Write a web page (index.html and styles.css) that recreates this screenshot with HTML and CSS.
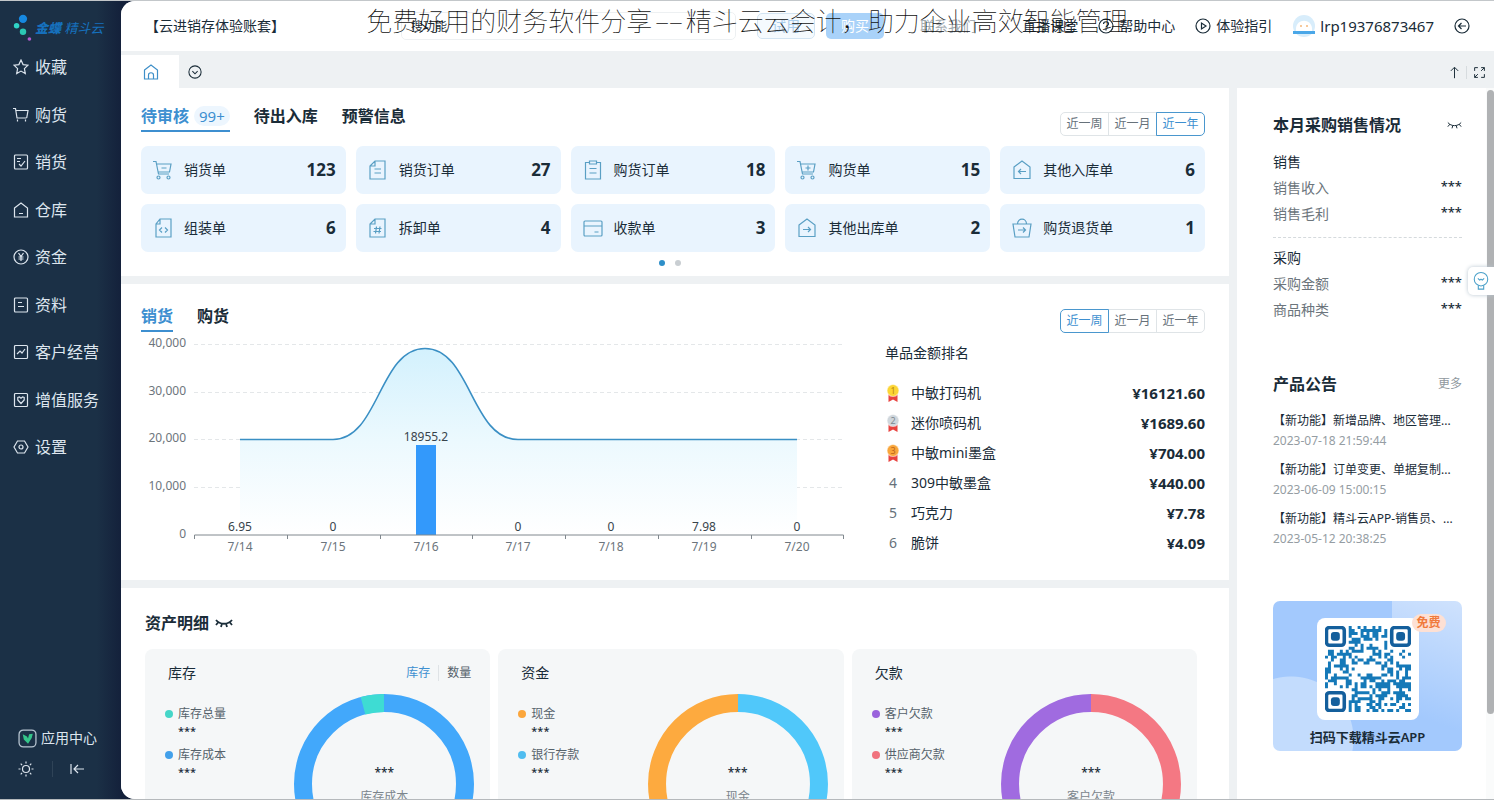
FILE: index.html
```html
<!DOCTYPE html>
<html lang="zh-CN">
<head>
<meta charset="utf-8">
<title>精斗云 云进销存</title>
<link rel="stylesheet" href="styles.css">
</head>
<body>
<svg class="sprite" aria-hidden="true">
  <symbol id="star" viewBox="0 0 16 16"><path d="M8 1l2.1 4.6 4.900.6-3.600 3.400.900 4.900L8 12.100l-4.300 2.400.900-4.900L1 6.200l4.900-.6z"/></symbol>
  <symbol id="cart" viewBox="0 0 16 16"><path d="M0 1.500h2.500L4 11h9.500M3 3.500h12l-1.300 7.500M4.500 12.500v2M12.500 12.500v2"/></symbol>
  <symbol id="sale" viewBox="0 0 16 16"><rect x="1.500" y="1" width="13" height="14" rx="1"/><path d="M4 4.500h4M4 7.500h3M6 10l2 2 4-5"/></symbol>
  <symbol id="house" viewBox="0 0 16 16"><path d="M1.500 6L8 1l6.500 5v9h-13zM6 11.500h4"/></symbol>
  <symbol id="money" viewBox="0 0 16 16"><circle cx="8" cy="8" r="7"/><path d="M5.500 4L8 7.500 10.500 4M8 7.500V12M5.500 8h5M5.500 10h5"/></symbol>
  <symbol id="data" viewBox="0 0 16 16"><rect x="1.500" y="1" width="13" height="14" rx="1"/><path d="M5 5.500h4M5 9.500h6"/></symbol>
  <symbol id="trend" viewBox="0 0 16 16"><rect x="1.500" y="1.500" width="13" height="13" rx="1"/><path d="M4 10l3-3 2 2 3-4"/></symbol>
  <symbol id="heart" viewBox="0 0 16 16"><rect x="1.500" y="1.500" width="13" height="13" rx="1"/><path d="M8 11.500L4.800 8V5.500L6.500 5 8 6.200 9.500 5l1.700.5V8z"/></symbol>
  <symbol id="gear" viewBox="0 0 16 16"><path d="M4.500 2h7L15 8l-3.500 6h-7L1 8z"/><circle cx="8" cy="8" r="2"/></symbol>
  <symbol id="cart-minus" viewBox="0 0 20 20"><path d="M0 1.500h3L5.500 14H16M3.500 4H18l-1.500 8H5M8.500 8h5"/><circle cx="5.500" cy="17.500" r="1.500"/><circle cx="15.500" cy="17.500" r="1.500"/></symbol>
  <symbol id="cart-plus" viewBox="0 0 20 20"><path d="M0 1.500h3L5.500 14H16M3.500 4H18l-1.500 8H5M11 5.500v5M8.500 8h5"/><circle cx="5.500" cy="17.500" r="1.500"/><circle cx="15.500" cy="17.500" r="1.500"/></symbol>
  <symbol id="doc" viewBox="0 0 20 20"><path d="M7 1h10v18H2V6zM7 1v5H2M6.500 9h6.500M6.500 13h6.500"/></symbol>
  <symbol id="doc-code" viewBox="0 0 20 20"><path d="M7 1h11v18H3V6zM7 1v5H3M9 9.500l-2.500 2.500L9 14.500M12 9.500l2.500 2.500-2.500 2.500"/></symbol>
  <symbol id="doc-hash" viewBox="0 0 20 20"><path d="M7 1h10v18H2V6zM7 1v5H2M8.500 8.500l-1 7M12 8.500l-1 7M6 10.500h7.500M5.500 13.500H13"/></symbol>
  <symbol id="clip" viewBox="0 0 20 20"><path d="M6.500 2.500H2.500V19h15V2.500h-4M6.500 1h7v3h-7zM6.500 8.500h7M6.500 13h7"/></symbol>
  <symbol id="card" viewBox="0 0 20 20"><rect x="1" y="3" width="18" height="15" rx="1"/><path d="M1 8h18M11.500 14h4"/></symbol>
  <symbol id="store-in" viewBox="0 0 20 20"><path d="M2 7l8-6 8 6v11.500H2zM14 11.500H6.500M9 9l-2.500 2.500L9 14"/></symbol>
  <symbol id="store-out" viewBox="0 0 20 20"><path d="M2 7l8-6 8 6v11.500H2zM6 11.500h7.500M11 9l2.500 2.500L11 14"/></symbol>
  <symbol id="bag" viewBox="0 0 20 20"><path d="M1 6h18l-2 13H3zM5.500 6c0-6.500 9-6.500 9 0M6 12h7.500M11 9.500l2.500 2.500-2.500 2.500"/></symbol>
  <symbol id="eye" viewBox="0 0 18 12"><path d="M1 3c4 5 12 5 16 0M3.500 5L1 8M7 6.500L6 10M11 6.500l1 3.500M14.500 5L17 8"/></symbol>
  <symbol id="medal" viewBox="0 0 16 20"><path d="M3.500 11h9V19L8 16.500 3.500 19z" fill="#e8423f" stroke="none"/><circle cx="8" cy="7.500" r="6" fill="currentColor" stroke="#fff" stroke-opacity=".5"/></symbol>
</svg>

<div class="app">
  <aside class="sidebar">
    <div class="logo">
      <svg viewBox="0 0 24 30"><circle cx="12" cy="5" r="4.500" fill="#1688e0"/><circle cx="5" cy="12.500" r="3" fill="#2fd3c6"/><circle cx="12" cy="19" r="3.500" fill="#2cc7b4"/><circle cx="19" cy="27" r="2" fill="#b65ad0"/></svg>
      <span class="logo-text"><b>金蝶</b> 精斗云</span>
    </div>
    <nav class="menu">
      <a href="#"><svg><use href="#star"/></svg>收藏</a>
      <a href="#"><svg><use href="#cart"/></svg>购货</a>
      <a href="#"><svg><use href="#sale"/></svg>销货</a>
      <a href="#"><svg><use href="#house"/></svg>仓库</a>
      <a href="#"><svg><use href="#money"/></svg>资金</a>
      <a href="#"><svg><use href="#data"/></svg>资料</a>
      <a href="#"><svg><use href="#trend"/></svg>客户经营</a>
      <a href="#"><svg><use href="#heart"/></svg>增值服务</a>
      <a href="#"><svg><use href="#gear"/></svg>设置</a>
    </nav>
    <div class="side-foot">
      <a class="apps" href="#"><svg viewBox="0 0 18 18"><rect x="1" y="1" width="16" height="16" rx="4" stroke="#b9c6d2"/><path d="M4.500 5l4 2 1 2 1-4 3.500-.5-1 4-3.500 5.500-4-4z" fill="#35c58a" stroke="none"/></svg>应用中心</a>
      <div class="tools">
        <button aria-label="主题"><svg viewBox="0 0 16 16"><circle cx="8" cy="8" r="3.500"/><path d="M8 .5v2M8 13.500v2M.5 8h2M13.500 8h2M2.700 2.700l1.400 1.400M11.900 11.900l1.400 1.400M2.700 13.300l1.400-1.400M11.900 4.100l1.400-1.400"/></svg></button>
        <button aria-label="收起"><svg viewBox="0 0 16 16"><path d="M2 3v10M15 8H5M9 4L5 8l4 4"/></svg></button>
      </div>
    </div>
  </aside>

  <div class="main">
    <header class="topbar">
      <span class="account">【云进销存体验账套】</span>
      <input class="search" type="text" aria-label="搜索" placeholder="搜功能">
      <button class="btn trial">试用</button>
      <button class="btn buy">购买</button>
      <a class="faint" href="#">联系我们</a>
      <span class="links">
        <a href="#">直播课堂</a>
        <a href="#"><svg viewBox="0 0 16 16"><circle cx="8" cy="8" r="7"/><path d="M5.500 6c0-3 5-3 5 0 0 1.500-2.500 1.500-2.500 3.500M8 11v1.500"/></svg>帮助中心</a>
        <a href="#"><svg viewBox="0 0 16 16"><circle cx="8" cy="8" r="7"/><path d="M6.500 5v6l4.500-3z"/></svg>体验指引</a>
        <a href="#" class="user"><svg viewBox="0 0 24 24"><circle cx="12" cy="12" r="11" fill="#d8edfb" stroke="none"/><path d="M4 15c0-11 16-11 16 0v4H4z" fill="#fff" stroke="none"/><path d="M1 17h22v3H1z" fill="#4aa7e8" stroke="none"/><path d="M9 11v2M15 11v2" stroke="#f2a65a"/></svg>lrp19376873467</a>
        <a href="#" aria-label="退出"><svg viewBox="0 0 16 16"><circle cx="8" cy="8" r="7"/><path d="M12 8H4.500M7.500 5l-3 3 3 3"/></svg></a>
      </span>
    </header>
    <div class="tabbar">
      <a class="tab-home" href="#" aria-label="首页"><svg viewBox="0 0 16 16"><path d="M1.500 6L8 1l6.500 5v9h-13zM5.500 15v-4c0-3 5-3 5 0v4"/></svg></a>
      <button class="tab-more" aria-label="更多标签"><svg viewBox="0 0 16 16"><circle cx="8" cy="8" r="7"/><path d="M5 7l3 3 3-3"/></svg></button>
      <span class="tab-tools">
        <button aria-label="置顶"><svg viewBox="0 0 16 16"><path d="M8 15V2M3.500 6L8 1.500 12.500 6"/></svg></button>
        <button aria-label="全屏"><svg viewBox="0 0 16 16"><path d="M2 6V2h4M10 2h4v4M14 10v4h-4M6 14H2v-4M14 2l-4 4M2 14l4-4"/></svg></button>
      </span>
    </div>

    <div class="content">
      <div class="column">
        <section class="panel todo">
          <div class="panel-head">
            <div class="tabs">
              <button class="on">待审核<span class="count">99+</span></button>
              <button>待出入库</button>
              <button>预警信息</button>
            </div>
            <div class="range"><button>近一周</button><button>近一月</button><button class="on">近一年</button></div>
          </div>
          <div class="tiles">
            <a href="#"><svg><use href="#cart-minus"/></svg>销货单<b>123</b></a>
            <a href="#"><svg><use href="#doc"/></svg>销货订单<b>27</b></a>
            <a href="#"><svg><use href="#clip"/></svg>购货订单<b>18</b></a>
            <a href="#"><svg><use href="#cart-plus"/></svg>购货单<b>15</b></a>
            <a href="#"><svg><use href="#store-in"/></svg>其他入库单<b>6</b></a>
            <a href="#"><svg><use href="#doc-code"/></svg>组装单<b>6</b></a>
            <a href="#"><svg><use href="#doc-hash"/></svg>拆卸单<b>4</b></a>
            <a href="#"><svg><use href="#card"/></svg>收款单<b>3</b></a>
            <a href="#"><svg><use href="#store-out"/></svg>其他出库单<b>2</b></a>
            <a href="#"><svg><use href="#bag"/></svg>购货退货单<b>1</b></a>
          </div>
          <div class="pager"><i class="on"></i><i></i></div>
        </section>

        <section class="panel sales">
          <div class="sales-chart">
            <div class="tabs"><button class="on">销货</button><button>购货</button></div>
            <svg class="chart" viewBox="0 0 710 224" role="img" aria-label="销货趋势">
              <defs><linearGradient id="area" x1="0" y1="0" x2="0" y2="1"><stop offset="0" stop-color="#d3f1fd"/><stop offset=".5" stop-color="#ecf9fe"/><stop offset="1" stop-color="#fff"/></linearGradient></defs>
              <path class="grid" d="M53 12.500h649M53 60.500h649M53 107.500h649M53 155.500h649"/>
              <path fill="url(#area)" d="M99 107.500h93c46 0 46-91 92-91s46 91 93 91h279v95H99z"/>
              <path class="line" d="M99 107.500h93c46 0 46-91 92-91s46 91 93 91h279"/>
              <path fill="#3399fb" d="M275 113h20v90h-20z"/>
              <path class="axis" d="M53.500 207v-4h649v4M146.500 203v4M239.500 203v4M331.500 203v4M424.500 203v4M517.500 203v4M610.500 203v4"/>
              <g class="ylab"><text x="45" y="15">40,000</text><text x="45" y="63">30,000</text><text x="45" y="110">20,000</text><text x="45" y="158">10,000</text><text x="45" y="206">0</text></g>
              <g class="xlab"><text x="99" y="219">7/14</text><text x="192" y="219">7/15</text><text x="285" y="219">7/16</text><text x="377" y="219">7/17</text><text x="470" y="219">7/18</text><text x="563" y="219">7/19</text><text x="656" y="219">7/20</text></g>
              <g class="vals"><text x="99" y="199">6.95</text><text x="192" y="199">0</text><text x="285" y="109">18955.2</text><text x="377" y="199">0</text><text x="470" y="199">0</text><text x="563" y="199">7.98</text><text x="656" y="199">0</text></g>
            </svg>
          </div>
          <div class="ranking">
            <div class="range"><button class="on">近一周</button><button>近一月</button><button>近一年</button></div>
            <h3>单品金额排名</h3>
            <ol>
              <li><span class="medal gold"><svg><use href="#medal"/></svg><em>1</em></span>中敏打码机<b>¥16121.60</b></li>
              <li><span class="medal silver"><svg><use href="#medal"/></svg><em>2</em></span>迷你喷码机<b>¥1689.60</b></li>
              <li><span class="medal bronze"><svg><use href="#medal"/></svg><em>3</em></span>中敏mini墨盒<b>¥704.00</b></li>
              <li><span class="rank">4</span>309中敏墨盒<b>¥440.00</b></li>
              <li><span class="rank">5</span>巧克力<b>¥7.78</b></li>
              <li><span class="rank">6</span>脆饼<b>¥4.09</b></li>
            </ol>
          </div>
        </section>

        <section class="panel assets">
          <h2>资产明细<svg><use href="#eye"/></svg></h2>
          <div class="asset-cards">
            <article>
              <header>库存<span class="switch"><button class="on">库存</button><button>数量</button></span></header>
              <div class="asset-body">
                <dl><dt class="teal">库存总量</dt><dd>***</dd><dt class="blue">库存成本</dt><dd>***</dd></dl>
                <div class="donut"><svg viewBox="0 0 182 182"><circle cx="91" cy="91" r="81" stroke="#42a8fb"/><path d="M70 12.800A81 81 0 0 1 91 10" stroke="#3edcd3"/></svg><p><b>***</b>库存成本</p></div>
              </div>
            </article>
            <article>
              <header>资金</header>
              <div class="asset-body">
                <dl><dt class="orange">现金</dt><dd>***</dd><dt class="sky">银行存款</dt><dd>***</dd></dl>
                <div class="donut"><svg viewBox="0 0 182 182"><path d="M91 10a81 81 0 0 1 0 162" stroke="#50c8fa"/><path d="M91 172a81 81 0 0 1 0-162" stroke="#fdaa3f"/></svg><p><b>***</b>现金</p></div>
              </div>
            </article>
            <article>
              <header>欠款</header>
              <div class="asset-body">
                <dl><dt class="purple">客户欠款</dt><dd>***</dd><dt class="pink">供应商欠款</dt><dd>***</dd></dl>
                <div class="donut"><svg viewBox="0 0 182 182"><path d="M91 10a81 81 0 0 1 0 162" stroke="#f47883"/><path d="M91 172a81 81 0 0 1 0-162" stroke="#a06be0"/></svg><p><b>***</b>客户欠款</p></div>
              </div>
            </article>
          </div>
        </section>
      </div>

      <aside class="side-panel">
        <h2>本月采购销售情况<svg><use href="#eye"/></svg></h2>
        <div class="stats">
          <h3>销售</h3>
          <p>销售收入<b>***</b></p>
          <p>销售毛利<b>***</b></p>
        </div>
        <div class="stats">
          <h3>采购</h3>
          <p>采购金额<b>***</b></p>
          <p>商品种类<b>***</b></p>
        </div>
        <div class="news">
          <h2>产品公告<a href="#">更多</a></h2>
          <ul>
            <li><a href="#">【新功能】新增品牌、地区管理...</a><time>2023-07-18 21:59:44</time></li>
            <li><a href="#">【新功能】订单变更、单据复制...</a><time>2023-06-09 15:00:15</time></li>
            <li><a href="#">【新功能】精斗云APP-销售员、...</a><time>2023-05-12 20:38:25</time></li>
          </ul>
        </div>
        <div class="promo">
          <div class="qr"><svg id="qr" viewBox="0 0 29 29" role="img" aria-label="二维码"></svg><span class="free">免费</span></div>
          <p>扫码下载精斗云APP</p>
        </div>
      </aside>
      <div class="scroll"><i></i></div>
    </div>
  </div>
  <button class="helper" aria-label="助手"><svg viewBox="0 0 20 22"><circle cx="10" cy="9" r="7.500"/><path d="M7 16v4h6v-4M6.500 8l2 2 1.500-1 1.500 1 2-2"/></svg></button>
  <h1 class="headline">免费好用的财务软件分享<span>––</span>精斗云云会计，助力企业高效智能管理</h1>
</div>
<script src="script.js"></script>
</body>
</html>
```

FILE: styles.css
```css
* { box-sizing: border-box; }
body, h1, h2, h3, p, dl, dd, ol, ul { margin: 0; padding: 0; }
ol, ul { list-style: none; }
body, button, input { font-family: "Noto Sans", "Noto Sans CJK SC", sans-serif; }
body { font-size: 14px; line-height: 24px; color: #1a2c38; background: #fff; }
button { padding: 0; border: 0; background: none; color: inherit; font-size: inherit; line-height: inherit; }
a { color: inherit; text-decoration: none; }
svg { display: block; flex: none; width: 16px; height: 16px; fill: none; stroke: currentColor; stroke-width: 1.2; }
.sprite { position: absolute; width: 0; height: 0; }

.app { position: relative; display: flex; height: 100vh; overflow: hidden; background: #13203a; border-top: 1px solid #c3c7ca; border-bottom: 1px solid #b5b9bc; }

/* Sidebar */
.sidebar { display: flex; flex-direction: column; width: 121px; flex: none; background: linear-gradient(90deg, #1b3046 80%, #14213b); color: #dde5ee; }
.logo { display: flex; align-items: center; gap: 1px; height: 54px; padding-left: 12px; }
.logo svg { width: 22px; height: 28px; stroke: none; }
.logo-text { color: #1670bd; font-size: 13px; font-style: italic; white-space: nowrap; }
.logo-text b { font-weight: 900; }
.menu { display: flex; flex-direction: column; justify-content: space-between; height: 404px; }
.menu a { display: flex; align-items: center; gap: 6px; padding-left: 13px; font-size: 16px; }
.side-foot { margin-top: auto; padding: 0 0 22px 18px; }
.apps { display: flex; align-items: center; gap: 4px; }
.apps svg { width: 19px; height: 19px; }
.tools { display: flex; align-items: center; gap: 16px; margin-top: 11px; }
.tools button { width: 18px; height: 16px; }
.tools button + button { width: 32px; padding-left: 16px; border-left: 1px solid #2f4357; }

/* Main frame */
.main { display: flex; flex-direction: column; flex: 1; min-width: 0; background: #eef1f3; border-radius: 14px 0 0 14px; overflow: hidden; }
.topbar { display: flex; align-items: center; height: 50px; flex: none; padding: 0 24px 0 24px; background: #fff; }
.account { width: 256px; }
.search { width: 335px; height: 28px; padding: 0 9px; border: 1px solid #edf0f2; border-radius: 5px; background: #fff; font-size: 12px; }
.search::placeholder { color: #1a2c38; opacity: 1; }
.btn { width: 58px; height: 26px; border-radius: 5px; font-size: 14px; }
.trial { margin-left: 21px; border: 1px solid #d3e4f2; background: #f5fafe; color: #a9cdec; }
.buy { margin-left: 11px; background: #a9d2f9; color: #fff; }
.faint { margin-left: 36px; color: #a4adb3; }
.links { display: flex; align-items: center; gap: 20px; margin-left: auto; }
.links a { display: flex; align-items: center; gap: 5px; }
.links .user { gap: 4px; font-size: 15px; }
.user svg { width: 24px; height: 24px; }
.tabbar { display: flex; align-items: center; height: 37px; flex: none; padding-right: 8px; }
.tab-home { display: flex; align-items: center; justify-content: center; align-self: stretch; width: 58px; margin-top: 4px; padding-left: 2px; background: #fff; color: #3e8fc8; }
.tab-more { margin: 4px 0 0 9px; }
.tab-more svg { width: 14px; height: 14px; }
.tab-tools { display: flex; align-items: center; margin: 6px 0 0 auto; }
.tab-tools svg { width: 13px; height: 13px; }
.tab-tools button + button { margin-left: 5px; padding-left: 6px; border-left: 1px solid #d7dcdf; }

.content { display: flex; flex: 1; min-height: 0; }
.column { display: flex; flex-direction: column; gap: 8px; flex: 1; min-width: 0; }
.panel { flex: none; background: #fff; }

/* Shared controls */
.tabs { display: flex; gap: 24px; }
.tabs button { height: 31px; border-bottom: 2px solid transparent; font-size: 16px; font-weight: 700; }
.tabs .on { color: #3d8fd0; border-color: #3d8fd0; }
.count { margin-left: 5px; padding: 0 5px; border-radius: 10px; background: #edf6fe; font-size: 15px; font-weight: 400; }
.range { display: flex; font-size: 12px; line-height: 20px; color: #66717a; }
.range button { width: 49px; height: 24px; margin-left: -1px; border: 1px solid #dfe4e7; }
.range button:first-child { border-radius: 5px 0 0 5px; }
.range button:last-child { border-radius: 0 5px 5px 0; }
.range .on { border-color: #4a97ce; color: #3d8fd0; z-index: 1; }

/* To-do */
.todo { padding: 13px 24px 10px 20px; }
.panel-head { display: flex; justify-content: space-between; align-items: flex-start; margin-bottom: 14px; }
.panel-head .range { margin-top: 11px; }
.panel-head { height: 31px; }
.tiles { display: grid; grid-template-columns: repeat(5, 1fr); gap: 10px; }
.tiles a { display: flex; align-items: center; gap: 11px; height: 48px; padding: 0 10px 0 12px; border-radius: 7px; background: #e9f4fe; white-space: nowrap; }
.tiles svg { width: 20px; height: 20px; color: #5a9fc4; }
.tiles b { margin-left: auto; font-size: 17px; }
.pager { display: flex; justify-content: center; gap: 10px; padding: 8px 6px 0 0; }
.pager i { width: 6px; height: 6px; border-radius: 50%; background: #c9ced2; }
.pager .on { background: #2e8fc9; }

/* Sales */
.sales { display: flex; padding: 17px 24px 22px 20px; }
.sales-chart { flex: 1; min-width: 0; }
.chart { width: 100%; height: auto; stroke: none; }
.chart text { font-size: 12px; fill: #6c757c; }
.grid { stroke: #e4e7e9; stroke-width: 1; stroke-dasharray: 4 3; }
.line { stroke: #3a8fc4; stroke-width: 1.6; }
.axis { stroke: #80888e; stroke-width: 1; }
.ylab { text-anchor: end; }
.xlab, .vals { text-anchor: middle; }
.vals text { fill: #38444c; }
.ranking { display: flex; flex-direction: column; width: 320px; margin-left: 34px; padding-top: 8px; }
.ranking .range { align-self: flex-end; }
.ranking h3 { margin: 8px 0 13px; font-size: 14px; font-weight: 400; }
.ranking li { display: flex; align-items: center; height: 30px; }
.ranking li b { margin-left: auto; font-size: 15px; }
.rank, .medal { width: 16px; margin-right: 10px; text-align: center; color: #66717a; }
.medal { position: relative; }
.medal svg { width: 16px; height: 20px; }
.medal em { position: absolute; inset: 0; color: #b98a12; font-size: 9px; font-style: normal; line-height: 15px; }
.gold { color: #fcd535; }
.silver { color: #cfd6dc; }
.silver em { color: #7d8890; }
.bronze { color: #f9a63a; }
.bronze em { color: #b9641a; }

/* Assets */
.assets { padding: 23px 32px 24px 24px; }
.assets h2 { display: flex; align-items: center; gap: 6px; margin-bottom: 14px; font-size: 16px; }
.assets h2 svg { width: 18px; height: 12px; stroke-width: 1.8; }
.asset-cards { display: grid; grid-template-columns: repeat(3, 1fr); gap: 8px; }
.asset-cards article { padding: 12px 15px 24px 20px; border-radius: 8px; background: #f5f7f8; }
.asset-cards header { display: flex; justify-content: space-between; padding: 0 4px 0 3px; }
.switch { font-size: 12px; color: #56626b; }
.switch .on { margin-right: 8px; padding-right: 8px; border-right: 1px solid #dfe3e6; color: #3d8fd0; }
.switch button { line-height: 16px; }
.asset-body { display: flex; justify-content: space-between; padding-top: 8px; }
.asset-cards dl { padding-top: 9px; font-size: 12px; }
.asset-cards dt { display: flex; align-items: center; gap: 5px; color: #56626b; }
.asset-cards dt::before { content: ""; width: 8px; height: 8px; border-radius: 50%; background: currentColor; }
.asset-cards dd { height: 17px; padding-left: 13px; font-size: 11px; line-height: 10px; font-weight: 500; }
.asset-cards .teal::before { color: #45d6c8; }
.asset-cards .blue::before { color: #42a0ea; }
.asset-cards .orange::before { color: #fba63c; }
.asset-cards .sky::before { color: #50bdf0; }
.asset-cards .purple::before { color: #9a63dc; }
.asset-cards .pink::before { color: #f0737e; }
.donut { display: grid; }
.donut > * { grid-area: 1 / 1; }
.donut svg { width: 182px; height: 182px; stroke-width: 18; }
.donut p { align-self: center; padding-top: 2px; text-align: center; font-size: 12px; color: #7b858c; }
.donut b { display: block; color: #1a2c38; font-size: 12px; font-weight: 500; }

/* Right panel */
.side-panel { width: 249px; flex: none; margin-left: 8px; padding: 25px 24px 0 36px; background: #fff; }
.side-panel h2 { display: flex; justify-content: space-between; align-items: center; font-size: 16px; white-space: nowrap; }
.side-panel h2 svg { width: 15px; height: 10px; }
.stats { padding: 12px 0 10px; line-height: 26px; }
.stats + .stats { padding-top: 7px; border-top: 1px dashed #d5dadd; }
.stats h3 { font-size: 14px; font-weight: 400; }
.stats p { display: flex; justify-content: space-between; color: #6c757c; }
.stats b { color: #1a2c38; font-size: 13px; font-weight: 500; line-height: 22px; }
.news { padding-top: 39px; }
.news h2 a { font-size: 12px; font-weight: 400; color: #8f989e; }
.news ul { display: grid; gap: 9px; margin-top: 15px; font-size: 12px; line-height: 20px; }
.news li a { display: block; white-space: nowrap; }
.news time { display: block; color: #959da3; }
.promo { display: flex; flex-direction: column; align-items: center; margin-top: 52px; padding: 17px 0 2px; border-radius: 7px; background: radial-gradient(circle at 18px 138px, #c3dcfd 0 62px, transparent 63px), linear-gradient(90deg, #a3c9fd 63%, transparent 63%), linear-gradient(200deg, #cfe2fd, #a3c9fd 60%); }
.qr { position: relative; padding: 8px; border-radius: 8px; background: #fff; }
.qr svg { width: 86px; height: 86px; stroke: none; fill: #1579b8; }
.free { position: absolute; top: -4px; left: 95px; padding: 0 5px; border-radius: 9px; background: #fde0d4; color: #f07a3c; font-size: 12px; font-weight: 700; line-height: 18px; white-space: nowrap; }
.promo p { margin-top: 5px; font-size: 13px; font-weight: 600; }

.scroll { width: 8px; flex: none; padding: 2px 0 0 1px; background: #fafbfb; }
.scroll i { display: block; height: 88%; border-radius: 4px; background: #b0b2b4; }
.helper { position: absolute; top: 266px; right: 0; display: flex; align-items: center; justify-content: center; width: 26px; height: 28px; border-radius: 5px 0 0 5px; background: #fff; box-shadow: 0 0 4px #b9c6d0; color: #4aa0c9; }
.helper svg { width: 18px; height: 20px; }

.headline { position: absolute; top: 0; left: 0; right: 0; font-family: "Noto Sans CJK SC", sans-serif; font-size: 26px; font-weight: 100; line-height: 38px; text-align: center; color: #111; pointer-events: none; }
.headline span { padding: 0 3px; }
```

FILE: script.js
```js
// Draws the QR code modules into the promo card.
const size = 29;
const isFinder = (x, y) => (x < 8 && y < 8) || (x > 20 && y < 8) || (x < 8 && y > 20);
const isLogo = (x, y) => x > 9 && x < 19 && y > 12 && y < 16;
let seed = 11;
let modules = "";
for (let y = 0; y < size; y++) {
  for (let x = 0; x < size; x++) {
    seed = (seed * 1103515245 + 12345) % 2147483648;
    if (!isFinder(x, y) && !isLogo(x, y) && seed / 2147483648 < 0.5) {
      modules += `M${x} ${y}h1v1h-1z`;
    }
  }
}
const ring = (x, y) =>
  `<rect x="${x + 0.5}" y="${y + 0.5}" width="6" height="6" rx="1" fill="none" stroke="#145f9c"/>` +
  `<rect x="${x + 2}" y="${y + 2}" width="3" height="3" rx="1" fill="#145f9c"/>`;
document.getElementById("qr").innerHTML =
  `<path d="${modules}"/>` + ring(0, 0) + ring(22, 0) + ring(0, 22);
```
